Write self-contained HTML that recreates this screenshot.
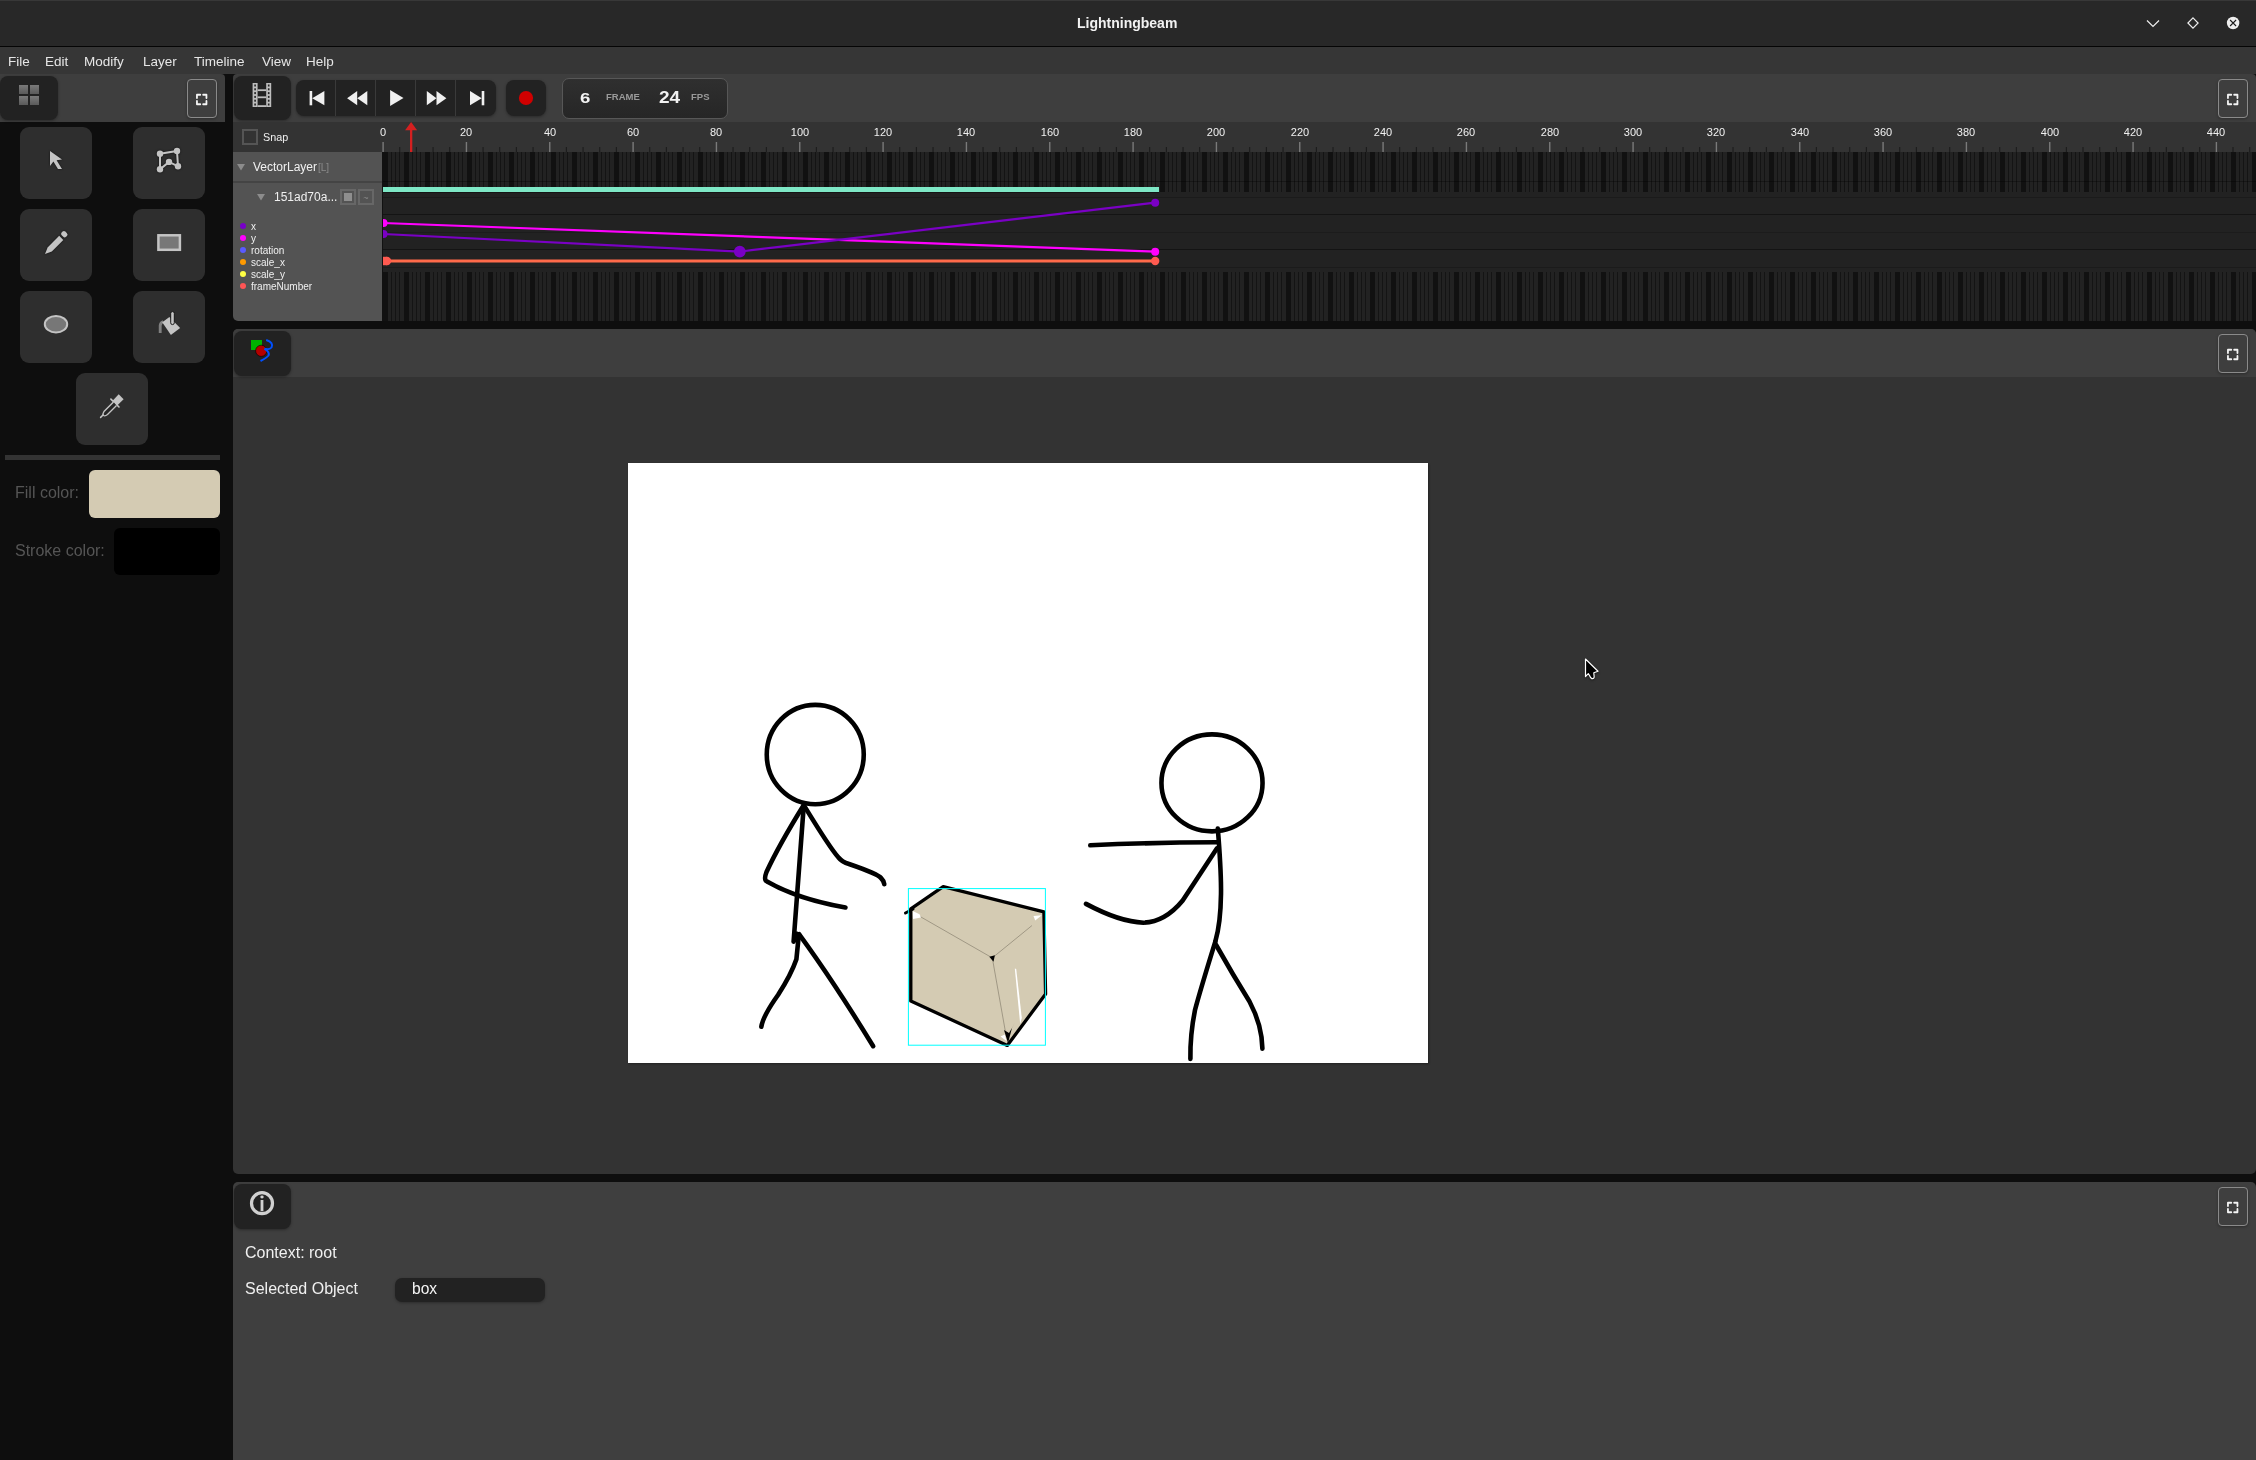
<!DOCTYPE html><html><head><meta charset="utf-8"><style>
*{margin:0;padding:0;box-sizing:border-box}
html,body{width:2256px;height:1460px;overflow:hidden;background:#0e0e0e;font-family:"Liberation Sans",sans-serif}
.a{position:absolute}
.t{position:absolute;white-space:nowrap;line-height:1;will-change:transform}
.hbtn{position:absolute;background:#222;border-radius:8px;box-shadow:0 1px 3px rgba(0,0,0,.35)}
.tool{position:absolute;width:72px;height:72px;background:#2e2e2e;border-radius:9px}
.fsb{position:absolute;width:30px;height:39px;border:1px solid #8a8a8a;border-radius:4px;box-shadow:0 1px 3px rgba(0,0,0,.3)}
svg{position:absolute;overflow:visible}
</style></head><body>
<div class="a" style="left:0;top:0;width:2256px;height:46px;background:#282828;border-top:1px solid #383838"></div>
<div class="a" style="left:0;top:46px;width:2256px;height:1px;background:#050505"></div>
<div class="t" style="left:1077px;top:16px;font-size:14px;font-weight:700;color:#f2f2f2;letter-spacing:0px">Lightningbeam</div>
<svg style="left:0;top:0" width="2256" height="46"><polyline points="2147,20.5 2153,26.5 2159,20.5" fill="none" stroke="#eee" stroke-width="1.2"/><polygon points="2193,17.9 2198.1,23 2193,28.1 2187.9,23" fill="none" stroke="#eee" stroke-width="1.2"/><circle cx="2233.1" cy="23" r="6.25" fill="#eee"/><path d="M2230.1,20 L2236.1,26 M2236.1,20 L2230.1,26" stroke="#1a1a1a" stroke-width="1.1"/></svg>
<div class="a" style="left:0;top:47px;width:2256px;height:27px;background:#363636"></div>
<div class="t" style="left:8.4px;top:54.6px;font-size:13.5px;color:#e6e6e6">File</div>
<div class="t" style="left:45.3px;top:54.6px;font-size:13.5px;color:#e6e6e6">Edit</div>
<div class="t" style="left:84.4px;top:54.6px;font-size:13.5px;color:#e6e6e6">Modify</div>
<div class="t" style="left:143.4px;top:54.6px;font-size:13.5px;color:#e6e6e6">Layer</div>
<div class="t" style="left:194.2px;top:54.6px;font-size:13.5px;color:#e6e6e6">Timeline</div>
<div class="t" style="left:261.9px;top:54.6px;font-size:13.5px;color:#e6e6e6">View</div>
<div class="t" style="left:306px;top:54.6px;font-size:13.5px;color:#e6e6e6">Help</div>
<div class="a" style="left:0;top:74px;width:225px;height:48px;background:#3e3e3e;border-top-right-radius:4px"></div>
<div class="hbtn" style="left:0;top:76px;width:58px;height:44px"></div>
<svg style="left:0;top:0" width="230" height="130"><defs><linearGradient id="gg" x1="0" y1="0" x2="0" y2="1"><stop offset="0" stop-color="#7a7a7a"/><stop offset="1" stop-color="#5a5a5a"/></linearGradient></defs><rect x="19" y="85" width="9" height="9" fill="url(#gg)"/><rect x="30" y="85" width="9" height="9" fill="url(#gg)"/><rect x="19" y="96" width="9" height="9" fill="url(#gg)"/><rect x="30" y="96" width="9" height="9" fill="url(#gg)"/></svg>
<div class="fsb" style="left:187px;top:79px"></div>
<svg style="left:0;top:0" width="1" height="1"><path d="M196.95,98.05 V94.75 H200.25 M203.14999999999998,94.75 H206.45 V98.05 M206.45,100.95 V104.25 H203.14999999999998 M200.25,104.25 H196.95 V100.95" fill="none" stroke="#f4f4f4" stroke-width="1.8" stroke-linejoin="round" stroke-linecap="round"/></svg>
<div class="tool" style="left:20px;top:127px"></div>
<div class="tool" style="left:133px;top:127px"></div>
<div class="tool" style="left:20px;top:209px"></div>
<div class="tool" style="left:133px;top:209px"></div>
<div class="tool" style="left:20px;top:291px"></div>
<div class="tool" style="left:133px;top:291px"></div>
<div class="tool" style="left:76px;top:373px"></div>
<svg style="left:0;top:0;filter:drop-shadow(0 0 0.8px #111)" width="1" height="1"><polygon points="50,151 62,159.5 56.6,160.3 62,169 58,169 53.4,161.5 50,166" fill="#c4c4c4"/></svg>
<svg style="left:0;top:0;filter:drop-shadow(0 0 0.8px #111)" width="1" height="1"><g fill="#c4c4c4"><path d="M160,153.7 L177,151 L178,166.3 L169,161.9 L160,169.3 Z" fill="none" stroke="#c4c4c4" stroke-width="2.0"/><circle cx="160" cy="153.7" r="3.2"/><circle cx="177" cy="151" r="3.2"/><circle cx="178" cy="166.3" r="3.2"/><circle cx="169" cy="161.9" r="3.2"/><circle cx="160" cy="169.3" r="3.2"/></g></svg>
<svg style="left:0;top:0;filter:drop-shadow(0 0 0.8px #111)" width="1" height="1"><g fill="#c4c4c4"><polygon points="45,254 47.6,247.4 59.2,235.8 63.3,239.9 51.8,251.4"/><rect x="61.2" y="231.6" width="6.2" height="5.2" rx="2" transform="rotate(45 64.3 234.2)"/></g></svg>
<svg style="left:0;top:0" width="1" height="1"><rect x="158.4" y="235.3" width="21.5" height="14.5" fill="#777" stroke="#c4c4c4" stroke-width="2.5"/></svg>
<svg style="left:0;top:0" width="1" height="1"><ellipse cx="56" cy="324.2" rx="11.2" ry="8.2" fill="#777" stroke="#c4c4c4" stroke-width="2"/></svg>
<svg style="left:0;top:0;filter:drop-shadow(0 0 0.7px #151515)" width="1" height="1"><path d="M163.2,321.6 Q160.6,322.3 160.2,325.5 L160.2,333" fill="none" stroke="#808080" stroke-width="3"/><polygon points="162.2,322.3 169.4,316.9 180.2,328.1 170.9,334.9" fill="#c4c4c4"/><rect x="170.7" y="311.6" width="3.6" height="13" rx="1.8" fill="#c4c4c4" stroke="#1a1a1a" stroke-width="1"/></svg>
<svg style="left:0;top:0" width="1" height="1"><g fill="#c4c4c4"><polygon points="118.7,394.3 123.6,399.2 117.2,405.4 112.6,400.8"/><line x1="110.9" y1="399.1" x2="119" y2="407" stroke="#c4c4c4" stroke-width="1.6" stroke-linecap="round"/><path d="M113.5,402 L104,411.5 Q102.2,414.5 103.5,415.5 Q105,416.5 107.5,414.5 L116.5,405.5" fill="#262626" stroke="#c4c4c4" stroke-width="1.4"/><line x1="103" y1="415" x2="100.6" y2="417.4" stroke="#c4c4c4" stroke-width="1.5" stroke-linecap="round"/></g></svg>
<div class="a" style="left:5px;top:455px;width:215px;height:5px;background:#333"></div>
<div class="t" style="left:15px;top:485px;font-size:16px;color:#555">Fill color:</div>
<div class="a" style="left:89px;top:470px;width:131px;height:48px;background:#d4cbb3;border-radius:6px"></div>
<div class="t" style="left:15px;top:543px;font-size:16px;color:#555">Stroke color:</div>
<div class="a" style="left:114px;top:528px;width:106px;height:47px;background:#000;border-radius:6px"></div>
<div class="a" style="left:233px;top:74px;width:2023px;height:48px;background:#3e3e3e;border-radius:4px 4px 0 0"></div>
<div class="hbtn" style="left:234px;top:76px;width:57px;height:44px"></div>
<svg style="left:0;top:0" width="1" height="1"><g fill="#bdbdbd"><rect x="252.6" y="83" width="5" height="24"/><rect x="266.2" y="83" width="5" height="24"/><rect x="257.6" y="89.3" width="8.6" height="1.8"/><rect x="257.6" y="96.4" width="8.6" height="1.8"/><rect x="257.6" y="105.2" width="8.6" height="1.8"/></g><g fill="#222"><rect x="254.3" y="84.5" width="1.6" height="2"/><rect x="254.3" y="88.3" width="1.6" height="2"/><rect x="254.3" y="92.1" width="1.6" height="2"/><rect x="254.3" y="95.9" width="1.6" height="2"/><rect x="254.3" y="99.7" width="1.6" height="2"/><rect x="254.3" y="103.5" width="1.6" height="2"/><rect x="267.9" y="84.5" width="1.6" height="2"/><rect x="267.9" y="88.3" width="1.6" height="2"/><rect x="267.9" y="92.1" width="1.6" height="2"/><rect x="267.9" y="95.9" width="1.6" height="2"/><rect x="267.9" y="99.7" width="1.6" height="2"/><rect x="267.9" y="103.5" width="1.6" height="2"/></g></svg>
<div class="hbtn" style="left:296px;top:80px;width:200px;height:36px"></div>
<div class="a" style="left:335px;top:80px;width:1px;height:36px;background:#3a3a3a"></div>
<div class="a" style="left:375px;top:80px;width:1px;height:36px;background:#3a3a3a"></div>
<div class="a" style="left:415px;top:80px;width:1px;height:36px;background:#3a3a3a"></div>
<div class="a" style="left:455px;top:80px;width:1px;height:36px;background:#3a3a3a"></div>
<svg style="left:0;top:0" width="1" height="1"><g fill="#f0f0f0"><rect x="309.6" y="91" width="2.6" height="14.3"/><polygon points="312.2,98.2 324.4,91 324.4,105.3"/><polygon points="347.1,98.2 357.2,91 357.2,105.3"/><polygon points="357.2,98.2 367.3,91 367.3,105.3"/><polygon points="390.1,90.1 403.5,98.1 390.1,106.1"/><polygon points="426.8,91 436.5,98.2 426.8,105.3"/><polygon points="436.5,91 446.4,98.2 436.5,105.3"/><polygon points="470,91 481.7,98.2 470,105.3"/><rect x="481.7" y="91" width="2.6" height="14.3"/></g></svg>
<div class="hbtn" style="left:506px;top:80px;width:40px;height:36px"></div>
<svg style="left:0;top:0" width="1" height="1"><circle cx="526" cy="98" r="7.1" fill="#d00000"/></svg>
<div class="a" style="left:562px;top:77.5px;width:166px;height:41px;border:1px solid #575757;border-radius:7px;background:linear-gradient(#2f2f2f,#262626)"></div>
<div class="t" style="left:580.4px;top:90.73px;font-size:14.5px;font-weight:700;color:#f2f2f2;transform:scaleX(1.28);transform-origin:0 0">6</div>
<div class="t" style="left:606px;top:92.16px;font-size:9.5px;font-weight:700;color:#9a9a9a">FRAME</div>
<div class="t" style="left:659.4px;top:89.12px;font-size:16.4px;font-weight:700;color:#f2f2f2;transform:scaleX(1.16);transform-origin:0 0">24</div>
<div class="t" style="left:690.6px;top:92.16px;font-size:9.5px;font-weight:700;color:#9a9a9a">FPS</div>
<div class="fsb" style="left:2218px;top:79px"></div>
<svg style="left:0;top:0" width="1" height="1"><path d="M2227.95,98.05 V94.75 H2231.25 M2234.1499999999996,94.75 H2237.45 V98.05 M2237.45,100.95 V104.25 H2234.1499999999996 M2231.25,104.25 H2227.95 V100.95" fill="none" stroke="#f4f4f4" stroke-width="1.8" stroke-linejoin="round" stroke-linecap="round"/></svg>
<div class="a" style="left:233px;top:122px;width:2023px;height:30px;background:#333"></div>
<div class="a" style="left:242px;top:129px;width:16px;height:16px;border:2px solid #555;background:#333"></div>
<div class="t" style="left:263px;top:131.96px;font-size:10.8px;color:#f0f0f0">Snap</div>
<svg style="left:0;top:0" width="1" height="1"><rect x="382.40" y="142" width="1.4" height="10" fill="#7a7a7a"/><rect x="399.17" y="147" width="1.1" height="5" fill="#1c1c1c"/><rect x="415.83" y="147" width="1.1" height="5" fill="#1c1c1c"/><rect x="432.50" y="147" width="1.1" height="5" fill="#1c1c1c"/><rect x="449.17" y="147" width="1.1" height="5" fill="#1c1c1c"/><rect x="465.73" y="142" width="1.4" height="10" fill="#7a7a7a"/><rect x="482.50" y="147" width="1.1" height="5" fill="#1c1c1c"/><rect x="499.16" y="147" width="1.1" height="5" fill="#1c1c1c"/><rect x="515.83" y="147" width="1.1" height="5" fill="#1c1c1c"/><rect x="532.50" y="147" width="1.1" height="5" fill="#1c1c1c"/><rect x="549.06" y="142" width="1.4" height="10" fill="#7a7a7a"/><rect x="565.83" y="147" width="1.1" height="5" fill="#1c1c1c"/><rect x="582.50" y="147" width="1.1" height="5" fill="#1c1c1c"/><rect x="599.16" y="147" width="1.1" height="5" fill="#1c1c1c"/><rect x="615.83" y="147" width="1.1" height="5" fill="#1c1c1c"/><rect x="632.40" y="142" width="1.4" height="10" fill="#7a7a7a"/><rect x="649.16" y="147" width="1.1" height="5" fill="#1c1c1c"/><rect x="665.83" y="147" width="1.1" height="5" fill="#1c1c1c"/><rect x="682.50" y="147" width="1.1" height="5" fill="#1c1c1c"/><rect x="699.16" y="147" width="1.1" height="5" fill="#1c1c1c"/><rect x="715.73" y="142" width="1.4" height="10" fill="#7a7a7a"/><rect x="732.49" y="147" width="1.1" height="5" fill="#1c1c1c"/><rect x="749.16" y="147" width="1.1" height="5" fill="#1c1c1c"/><rect x="765.83" y="147" width="1.1" height="5" fill="#1c1c1c"/><rect x="782.49" y="147" width="1.1" height="5" fill="#1c1c1c"/><rect x="799.06" y="142" width="1.4" height="10" fill="#7a7a7a"/><rect x="815.83" y="147" width="1.1" height="5" fill="#1c1c1c"/><rect x="832.49" y="147" width="1.1" height="5" fill="#1c1c1c"/><rect x="849.16" y="147" width="1.1" height="5" fill="#1c1c1c"/><rect x="865.83" y="147" width="1.1" height="5" fill="#1c1c1c"/><rect x="882.39" y="142" width="1.4" height="10" fill="#7a7a7a"/><rect x="899.16" y="147" width="1.1" height="5" fill="#1c1c1c"/><rect x="915.82" y="147" width="1.1" height="5" fill="#1c1c1c"/><rect x="932.49" y="147" width="1.1" height="5" fill="#1c1c1c"/><rect x="949.16" y="147" width="1.1" height="5" fill="#1c1c1c"/><rect x="965.72" y="142" width="1.4" height="10" fill="#7a7a7a"/><rect x="982.49" y="147" width="1.1" height="5" fill="#1c1c1c"/><rect x="999.16" y="147" width="1.1" height="5" fill="#1c1c1c"/><rect x="1015.82" y="147" width="1.1" height="5" fill="#1c1c1c"/><rect x="1032.49" y="147" width="1.1" height="5" fill="#1c1c1c"/><rect x="1049.06" y="142" width="1.4" height="10" fill="#7a7a7a"/><rect x="1065.82" y="147" width="1.1" height="5" fill="#1c1c1c"/><rect x="1082.49" y="147" width="1.1" height="5" fill="#1c1c1c"/><rect x="1099.16" y="147" width="1.1" height="5" fill="#1c1c1c"/><rect x="1115.82" y="147" width="1.1" height="5" fill="#1c1c1c"/><rect x="1132.39" y="142" width="1.4" height="10" fill="#7a7a7a"/><rect x="1149.15" y="147" width="1.1" height="5" fill="#1c1c1c"/><rect x="1165.82" y="147" width="1.1" height="5" fill="#1c1c1c"/><rect x="1182.49" y="147" width="1.1" height="5" fill="#1c1c1c"/><rect x="1199.15" y="147" width="1.1" height="5" fill="#1c1c1c"/><rect x="1215.72" y="142" width="1.4" height="10" fill="#7a7a7a"/><rect x="1232.49" y="147" width="1.1" height="5" fill="#1c1c1c"/><rect x="1249.15" y="147" width="1.1" height="5" fill="#1c1c1c"/><rect x="1265.82" y="147" width="1.1" height="5" fill="#1c1c1c"/><rect x="1282.49" y="147" width="1.1" height="5" fill="#1c1c1c"/><rect x="1299.05" y="142" width="1.4" height="10" fill="#7a7a7a"/><rect x="1315.82" y="147" width="1.1" height="5" fill="#1c1c1c"/><rect x="1332.48" y="147" width="1.1" height="5" fill="#1c1c1c"/><rect x="1349.15" y="147" width="1.1" height="5" fill="#1c1c1c"/><rect x="1365.82" y="147" width="1.1" height="5" fill="#1c1c1c"/><rect x="1382.38" y="142" width="1.4" height="10" fill="#7a7a7a"/><rect x="1399.15" y="147" width="1.1" height="5" fill="#1c1c1c"/><rect x="1415.82" y="147" width="1.1" height="5" fill="#1c1c1c"/><rect x="1432.48" y="147" width="1.1" height="5" fill="#1c1c1c"/><rect x="1449.15" y="147" width="1.1" height="5" fill="#1c1c1c"/><rect x="1465.72" y="142" width="1.4" height="10" fill="#7a7a7a"/><rect x="1482.48" y="147" width="1.1" height="5" fill="#1c1c1c"/><rect x="1499.15" y="147" width="1.1" height="5" fill="#1c1c1c"/><rect x="1515.82" y="147" width="1.1" height="5" fill="#1c1c1c"/><rect x="1532.48" y="147" width="1.1" height="5" fill="#1c1c1c"/><rect x="1549.05" y="142" width="1.4" height="10" fill="#7a7a7a"/><rect x="1565.81" y="147" width="1.1" height="5" fill="#1c1c1c"/><rect x="1582.48" y="147" width="1.1" height="5" fill="#1c1c1c"/><rect x="1599.15" y="147" width="1.1" height="5" fill="#1c1c1c"/><rect x="1615.81" y="147" width="1.1" height="5" fill="#1c1c1c"/><rect x="1632.38" y="142" width="1.4" height="10" fill="#7a7a7a"/><rect x="1649.15" y="147" width="1.1" height="5" fill="#1c1c1c"/><rect x="1665.81" y="147" width="1.1" height="5" fill="#1c1c1c"/><rect x="1682.48" y="147" width="1.1" height="5" fill="#1c1c1c"/><rect x="1699.15" y="147" width="1.1" height="5" fill="#1c1c1c"/><rect x="1715.71" y="142" width="1.4" height="10" fill="#7a7a7a"/><rect x="1732.48" y="147" width="1.1" height="5" fill="#1c1c1c"/><rect x="1749.14" y="147" width="1.1" height="5" fill="#1c1c1c"/><rect x="1765.81" y="147" width="1.1" height="5" fill="#1c1c1c"/><rect x="1782.48" y="147" width="1.1" height="5" fill="#1c1c1c"/><rect x="1799.04" y="142" width="1.4" height="10" fill="#7a7a7a"/><rect x="1815.81" y="147" width="1.1" height="5" fill="#1c1c1c"/><rect x="1832.48" y="147" width="1.1" height="5" fill="#1c1c1c"/><rect x="1849.14" y="147" width="1.1" height="5" fill="#1c1c1c"/><rect x="1865.81" y="147" width="1.1" height="5" fill="#1c1c1c"/><rect x="1882.38" y="142" width="1.4" height="10" fill="#7a7a7a"/><rect x="1899.14" y="147" width="1.1" height="5" fill="#1c1c1c"/><rect x="1915.81" y="147" width="1.1" height="5" fill="#1c1c1c"/><rect x="1932.48" y="147" width="1.1" height="5" fill="#1c1c1c"/><rect x="1949.14" y="147" width="1.1" height="5" fill="#1c1c1c"/><rect x="1965.71" y="142" width="1.4" height="10" fill="#7a7a7a"/><rect x="1982.47" y="147" width="1.1" height="5" fill="#1c1c1c"/><rect x="1999.14" y="147" width="1.1" height="5" fill="#1c1c1c"/><rect x="2015.81" y="147" width="1.1" height="5" fill="#1c1c1c"/><rect x="2032.47" y="147" width="1.1" height="5" fill="#1c1c1c"/><rect x="2049.04" y="142" width="1.4" height="10" fill="#7a7a7a"/><rect x="2065.81" y="147" width="1.1" height="5" fill="#1c1c1c"/><rect x="2082.47" y="147" width="1.1" height="5" fill="#1c1c1c"/><rect x="2099.14" y="147" width="1.1" height="5" fill="#1c1c1c"/><rect x="2115.81" y="147" width="1.1" height="5" fill="#1c1c1c"/><rect x="2132.37" y="142" width="1.4" height="10" fill="#7a7a7a"/><rect x="2149.14" y="147" width="1.1" height="5" fill="#1c1c1c"/><rect x="2165.80" y="147" width="1.1" height="5" fill="#1c1c1c"/><rect x="2182.47" y="147" width="1.1" height="5" fill="#1c1c1c"/><rect x="2199.14" y="147" width="1.1" height="5" fill="#1c1c1c"/><rect x="2215.70" y="142" width="1.4" height="10" fill="#7a7a7a"/><rect x="2232.47" y="147" width="1.1" height="5" fill="#1c1c1c"/><rect x="2249.14" y="147" width="1.1" height="5" fill="#1c1c1c"/></svg>
<div class="t" style="left:353.00px;width:60px;text-align:center;top:126.79px;font-size:11px;color:#f0f0f0">0</div>
<div class="t" style="left:436.33px;width:60px;text-align:center;top:126.79px;font-size:11px;color:#f0f0f0">20</div>
<div class="t" style="left:519.66px;width:60px;text-align:center;top:126.79px;font-size:11px;color:#f0f0f0">40</div>
<div class="t" style="left:603.00px;width:60px;text-align:center;top:126.79px;font-size:11px;color:#f0f0f0">60</div>
<div class="t" style="left:686.33px;width:60px;text-align:center;top:126.79px;font-size:11px;color:#f0f0f0">80</div>
<div class="t" style="left:769.66px;width:60px;text-align:center;top:126.79px;font-size:11px;color:#f0f0f0">100</div>
<div class="t" style="left:852.99px;width:60px;text-align:center;top:126.79px;font-size:11px;color:#f0f0f0">120</div>
<div class="t" style="left:936.32px;width:60px;text-align:center;top:126.79px;font-size:11px;color:#f0f0f0">140</div>
<div class="t" style="left:1019.66px;width:60px;text-align:center;top:126.79px;font-size:11px;color:#f0f0f0">160</div>
<div class="t" style="left:1102.99px;width:60px;text-align:center;top:126.79px;font-size:11px;color:#f0f0f0">180</div>
<div class="t" style="left:1186.32px;width:60px;text-align:center;top:126.79px;font-size:11px;color:#f0f0f0">200</div>
<div class="t" style="left:1269.65px;width:60px;text-align:center;top:126.79px;font-size:11px;color:#f0f0f0">220</div>
<div class="t" style="left:1352.98px;width:60px;text-align:center;top:126.79px;font-size:11px;color:#f0f0f0">240</div>
<div class="t" style="left:1436.32px;width:60px;text-align:center;top:126.79px;font-size:11px;color:#f0f0f0">260</div>
<div class="t" style="left:1519.65px;width:60px;text-align:center;top:126.79px;font-size:11px;color:#f0f0f0">280</div>
<div class="t" style="left:1602.98px;width:60px;text-align:center;top:126.79px;font-size:11px;color:#f0f0f0">300</div>
<div class="t" style="left:1686.31px;width:60px;text-align:center;top:126.79px;font-size:11px;color:#f0f0f0">320</div>
<div class="t" style="left:1769.64px;width:60px;text-align:center;top:126.79px;font-size:11px;color:#f0f0f0">340</div>
<div class="t" style="left:1852.98px;width:60px;text-align:center;top:126.79px;font-size:11px;color:#f0f0f0">360</div>
<div class="t" style="left:1936.31px;width:60px;text-align:center;top:126.79px;font-size:11px;color:#f0f0f0">380</div>
<div class="t" style="left:2019.64px;width:60px;text-align:center;top:126.79px;font-size:11px;color:#f0f0f0">400</div>
<div class="t" style="left:2102.97px;width:60px;text-align:center;top:126.79px;font-size:11px;color:#f0f0f0">420</div>
<div class="t" style="left:2186.30px;width:60px;text-align:center;top:126.79px;font-size:11px;color:#f0f0f0">440</div>
<div class="a" style="left:233px;top:152px;width:149px;height:169px;background:#535353;border-bottom-left-radius:5px"></div>
<div class="a" style="left:233px;top:181px;width:149px;height:1.5px;background:#444"></div>
<svg style="left:0;top:0" width="1" height="1"><polygon points="237,164 245,164 241,170.5" fill="#8c8c8c"/><polygon points="257,194 265,194 261,200.5" fill="#8c8c8c"/></svg>
<div class="t" style="left:253px;top:160.84px;font-size:12px;color:#f0f0f0">VectorLayer</div>
<div class="t" style="left:318px;top:163.03px;font-size:10px;color:#8a8a8a">[L]</div>
<div class="t" style="left:273.6px;top:190.84px;font-size:12px;color:#f0f0f0">151ad70a...</div>
<div class="a" style="left:340px;top:189px;width:16px;height:16px;border:2px solid #676767"></div>
<div class="a" style="left:344px;top:193px;width:8px;height:8px;background:#8e8e8e"></div>
<div class="a" style="left:358px;top:189px;width:16px;height:16px;border:2px solid #676767"></div>
<div class="t" style="left:358px;top:193.5px;width:16px;text-align:center;font-size:9px;color:#8a8a8a">~</div>
<div class="a" style="left:240px;top:222.5px;width:6px;height:6px;border-radius:50%;background:#7800c8"></div>
<div class="t" style="left:250.6px;top:222.13px;font-size:10px;color:#f0f0f0">x</div>
<div class="a" style="left:240px;top:234.5px;width:6px;height:6px;border-radius:50%;background:#ff00ff"></div>
<div class="t" style="left:250.6px;top:234.13px;font-size:10px;color:#f0f0f0">y</div>
<div class="a" style="left:240px;top:246.5px;width:6px;height:6px;border-radius:50%;background:#5a5aff"></div>
<div class="t" style="left:250.6px;top:246.13px;font-size:10px;color:#f0f0f0">rotation</div>
<div class="a" style="left:240px;top:258.5px;width:6px;height:6px;border-radius:50%;background:#ff9a00"></div>
<div class="t" style="left:250.6px;top:258.14px;font-size:10px;color:#f0f0f0">scale_x</div>
<div class="a" style="left:240px;top:270.5px;width:6px;height:6px;border-radius:50%;background:#ffff44"></div>
<div class="t" style="left:250.6px;top:270.14px;font-size:10px;color:#f0f0f0">scale_y</div>
<div class="a" style="left:240px;top:282.5px;width:6px;height:6px;border-radius:50%;background:#ff5555"></div>
<div class="t" style="left:250.6px;top:282.14px;font-size:10px;color:#f0f0f0">frameNumber</div>
<div class="a" style="left:382px;top:152px;width:1874px;height:169px;background:#222"></div>
<div class="a" style="left:382px;top:152px;width:1px;height:169px;background:#111"></div>
<div class="a" style="left:383px;top:152px;width:1873px;height:40px;background:repeating-linear-gradient(90deg,#111 0px,#111 4.7px,#222 4.7px,#222 7.6px,#141414 7.6px,#141414 8.8px,#222 8.8px,#222 11.6px,#141414 11.6px,#141414 12.8px,#222 12.8px,#222 15.6px,#141414 15.6px,#141414 16.8px,#222 16.8px,#222 21px)"></div>
<div class="a" style="left:383px;top:181px;width:1873px;height:1px;background:rgba(0,0,0,.3)"></div>
<div class="a" style="left:383px;top:272px;width:1873px;height:49px;background:repeating-linear-gradient(90deg,#111 0px,#111 4.7px,#222 4.7px,#222 7.6px,#141414 7.6px,#141414 8.8px,#222 8.8px,#222 11.6px,#141414 11.6px,#141414 12.8px,#222 12.8px,#222 15.6px,#141414 15.6px,#141414 16.8px,#222 16.8px,#222 21px)"></div>
<div class="a" style="left:383px;top:192px;width:776px;height:1px;background:#151515"></div>
<div class="a" style="left:383px;top:196.5px;width:1873px;height:1px;background:#1b1b1b"></div>
<div class="a" style="left:383px;top:214px;width:1873px;height:1px;background:#141414"></div>
<div class="a" style="left:383px;top:231.5px;width:1873px;height:1px;background:#1c1c1c"></div>
<div class="a" style="left:383px;top:249px;width:1873px;height:1px;background:#141414"></div>
<div class="a" style="left:383px;top:266.5px;width:1873px;height:1px;background:#1b1b1b"></div>
<div class="a" style="left:383px;top:187px;width:776px;height:5px;background:#7ee8c6"></div>
<svg style="left:0;top:0" width="1" height="1"><defs><clipPath id="tc"><rect x="383" y="152" width="1873" height="169"/></clipPath></defs><g clip-path="url(#tc)"><polyline points="383,223 1155.2,251.7" fill="none" stroke="#ff00ff" stroke-width="2.2"/><polyline points="383,234 739.8,251.6 1155.2,202.7" fill="none" stroke="#7a00c4" stroke-width="2.2"/><line x1="387" y1="261" x2="1155.2" y2="261" stroke="#ff6a4a" stroke-width="3"/><circle cx="383.5" cy="223" r="4" fill="#ff00ff"/><circle cx="383.5" cy="234" r="4" fill="#7a00c4"/><circle cx="387" cy="261" r="4.2" fill="#ff5a50"/><rect x="383" y="256.8" width="4" height="8.4" fill="#ff5a50"/><circle cx="739.8" cy="251.6" r="5.9" fill="#7a00c4"/><circle cx="1155.2" cy="202.7" r="4" fill="#7a00c4"/><circle cx="1155.2" cy="251.7" r="4" fill="#ff00ff"/><circle cx="1155.2" cy="261" r="4.2" fill="#ff5a50"/></g></svg>
<svg style="left:0;top:0" width="1" height="1"><polygon points="405.1,130.2 417.1,130.2 411.1,122" fill="#d42020"/><rect x="410" y="129" width="2.3" height="23" fill="#d42020"/></svg>
<div class="a" style="left:233px;top:329px;width:2023px;height:845px;background:#333;border-radius:5px"></div>
<div class="a" style="left:233px;top:329px;width:2023px;height:48px;background:#3e3e3e;border-radius:5px 5px 0 0"></div>
<div class="hbtn" style="left:234px;top:331px;width:57px;height:45px"></div>
<svg style="left:0;top:0" width="1" height="1"><rect x="251" y="340" width="11" height="10" fill="#00b400"/><circle cx="261.2" cy="350.8" r="5.6" fill="#b40000" stroke="#000" stroke-width="0.6"/><path d="M266.2,340 Q274,342.5 271.5,347.5 Q269.5,350 264.5,348.8 Q270,352 268.5,355.5 Q266.5,358 260.5,361" fill="none" stroke="#0050ff" stroke-width="2"/></svg>
<div class="fsb" style="left:2218px;top:334px"></div>
<svg style="left:0;top:0" width="1" height="1"><path d="M2227.95,353.05 V349.75 H2231.25 M2234.1499999999996,349.75 H2237.45 V353.05 M2237.45,355.95 V359.25 H2234.1499999999996 M2231.25,359.25 H2227.95 V355.95" fill="none" stroke="#f4f4f4" stroke-width="1.8" stroke-linejoin="round" stroke-linecap="round"/></svg>
<div class="a" style="left:628px;top:463px;width:800px;height:600px;background:#fff;box-shadow:1px 1px 2px rgba(0,0,0,.35)"></div>
<svg style="left:0;top:0" width="1" height="1"><g fill="none" stroke="#000" stroke-width="4.6" stroke-linecap="round" stroke-linejoin="round"><ellipse cx="815.25" cy="754.55" rx="48.5" ry="49.7"/><path d="M803.8,805 L793.6,941.7 Q796,931 799.2,935"/><path d="M803.8,805 Q779,845 766.5,872 Q763.5,880 767,881.5 Q796.9,898.9 845.4,907.5"/><path d="M804.7,806.6 Q830,848 838.5,857.5 Q842,862 849,864 Q878,874 881,878 Q884,881 884.3,884.3"/><path d="M799.2,934.3 Q834,982 873.2,1046.2"/><path d="M798.6,937 L796.4,959.3 Q791,975 778,995 Q763,1016 761.3,1026.8"/><ellipse cx="1212" cy="782.9" rx="50.55" ry="48.5"/><path d="M1217.8,828.6 C1221,868 1224,912 1215.3,941.6"/><path d="M1090.3,845.3 Q1150,842.5 1217,842.3"/><path d="M1217,848.3 L1182.7,900.5 Q1165,922 1143.4,922.7 Q1120,922 1086,903.9"/><path d="M1215.3,941.6 Q1200,991 1195,1010 Q1190,1035 1190.4,1058.9"/><path d="M1216.1,945 Q1233,975 1249.5,1001.5 Q1262,1025 1262.4,1048.6"/></g><polygon points="943.2,886.6 1043.9,911.8 1045.6,993.9 1007.3,1045.4 910.8,1001 910.8,908.8" fill="#d4cbb3" stroke="#000" stroke-width="3.3" stroke-linejoin="round"/><path d="M919.2,916 L992.3,957.9 L1031.9,925.6 M992.3,957.9 L1005.5,1032.2" stroke="#9a927f" stroke-width="0.9" fill="none"/><polygon points="989.3,956.7 994.9,955.3 993.5,961.8" fill="#000"/><polygon points="1014.8,968.5 1016.2,969 1021.8,1018 1020.2,1024" fill="#fff"/><polygon points="912.8,911 919.5,914.2 921,917.5 913,919" fill="#fff"/><polygon points="1041.8,915.2 1033.5,916 1035.2,920.5" fill="#fff"/><polygon points="1000.5,1036.5 1004.8,1034.5 1006.5,1041" fill="#fff"/><polygon points="1004,1030 1008,1043 1012,1028 1015.5,1022 1009,1033" fill="#000"/><line x1="905.5" y1="913" x2="913" y2="909" stroke="#000" stroke-width="3" stroke-linecap="round"/><rect x="908.4" y="888.6" width="137" height="156.6" fill="none" stroke="#00ffff" stroke-width="1"/></svg>
<svg style="left:0;top:0" width="1" height="1"><path d="M1585.5,659 L1598,671.3 L1593.8,672.8 L1594.2,677.2 Q1593.8,679 1591.8,678.6 Q1590.5,678 1589.5,675.5 L1588.3,673.7 L1585.5,676.5 Z" fill="#000" stroke="#fff" stroke-width="1.2" stroke-linejoin="round" style="filter:drop-shadow(0 1px 1px rgba(0,0,0,.5))"/></svg>
<div class="a" style="left:233px;top:1182px;width:2023px;height:278px;background:#3f3f3f;border-radius:5px 5px 0 0"></div>
<div class="hbtn" style="left:234px;top:1184px;width:57px;height:45px"></div>
<svg style="left:0;top:0" width="1" height="1"><circle cx="262" cy="1203.2" r="10.5" fill="none" stroke="#d0d0d0" stroke-width="3.2"/><rect x="260.6" y="1200" width="2.8" height="11.2" fill="#d0d0d0"/><ellipse cx="262" cy="1197" rx="1.7" ry="1.4" fill="#d0d0d0"/></svg>
<div class="fsb" style="left:2218px;top:1187px"></div>
<svg style="left:0;top:0" width="1" height="1"><path d="M2227.95,1206.05 V1202.75 H2231.25 M2234.1499999999996,1202.75 H2237.45 V1206.05 M2237.45,1208.95 V1212.25 H2234.1499999999996 M2231.25,1212.25 H2227.95 V1208.95" fill="none" stroke="#f4f4f4" stroke-width="1.8" stroke-linejoin="round" stroke-linecap="round"/></svg>
<div class="t" style="left:245px;top:1244.66px;font-size:16px;color:#f0f0f0">Context: root</div>
<div class="t" style="left:245px;top:1281.46px;font-size:16px;color:#f0f0f0">Selected Object</div>
<div class="a" style="left:395px;top:1278px;width:150px;height:24px;background:#222;border-radius:7px;box-shadow:0 1px 3px rgba(0,0,0,.3)"></div>
<div class="t" style="left:411.5px;top:1280.79px;font-size:15.6px;color:#f5f5f5">box</div>
</body></html>
